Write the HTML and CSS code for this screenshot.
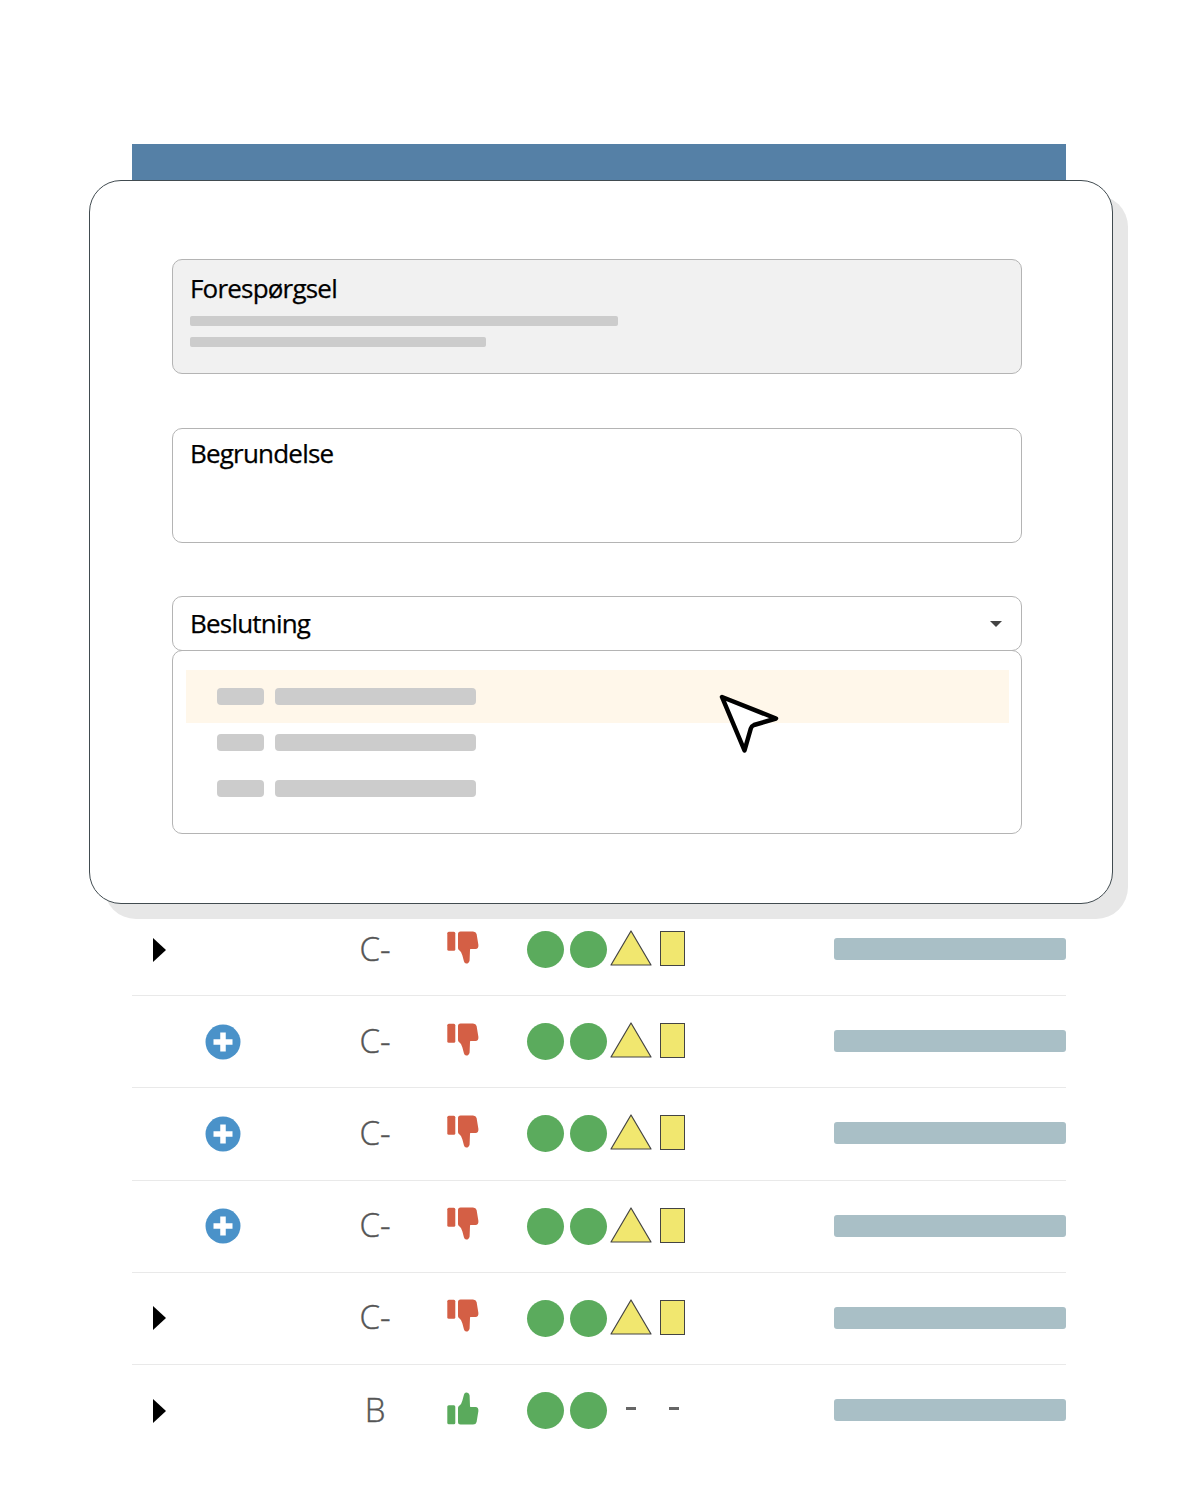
FILE: index.html
```html
<!DOCTYPE html>
<html lang="en">
<head>
    <meta charset="UTF-8">
    <meta name="viewport" content="width=device-width, initial-scale=1.0">
    <title>Beslutning</title>
    <link rel="stylesheet" href="styles.css">
</head>
<body>
<svg class="defs" width="0" height="0" aria-hidden="true">
    <symbol id="thumb" viewBox="0 0 32 33">
        <rect x="0.3" y="0.8" width="8" height="19" rx="1.5"/>
        <path d="M11 3Q11 .5 13.500 .5L26 .5Q29 .5 29.600 3L31.400 14Q31.600 18 28.500 18L23.500 18Q23 18 23 19L22.600 29.500Q22 32.600 19.200 32.600Q17.600 32.600 17 30.500L15.400 24.500Q14.500 20.500 12 19Q11 18.400 11 17Z"/>
    </symbol>
</svg>

<div class="page">
    <div class="topbar"></div>

    <div class="modal">
        <div class="field field-filled">
            <div class="field-label">Forespørgsel</div>
            <div class="line line-long"></div>
            <div class="line line-short"></div>
        </div>

        <div class="field">
            <div class="field-label field-label-tight">Begrundelse</div>
        </div>

        <div class="select">
            <div class="field-label">Beslutning</div>
            <span class="caret"></span>
        </div>
        <div class="options">
            <div class="option option-active"><span class="chip"></span><span class="chip-long"></span></div>
            <div class="option"><span class="chip"></span><span class="chip-long"></span></div>
            <div class="option"><span class="chip"></span><span class="chip-long"></span></div>
            <svg class="pointer" width="64" height="64" viewBox="0 0 64 64">
                <path d="M4 3L58 24.500L36 31Q33.500 32 32.800 34.500L26.500 56.500Z" fill="#fff" stroke="#000" stroke-width="4.500" stroke-linejoin="round"/>
            </svg>
        </div>
    </div>

    <div class="rows">
        <div class="row">
            <span class="expand"><span class="arrow"></span></span>
            <span class="grade">C-</span>
            <svg class="thumb thumb-down"><use href="#thumb"/></svg>
            <span class="marks"><i class="dot"></i><i class="dot"></i><svg class="tri" viewBox="0 0 42 36"><path d="M21 1L41 35H1Z"/></svg><i class="box"></i></span>
            <span class="bar"></span>
        </div>
        <div class="row">
            <span class="expand"><svg class="plus" viewBox="0 0 36 36"><circle cx="18" cy="18" r="17.500" fill="#4a92c9"/><path d="M18 8.500V27.500M8.500 18H27.500" stroke="#fff" stroke-width="5.500"/></svg></span>
            <span class="grade">C-</span>
            <svg class="thumb thumb-down"><use href="#thumb"/></svg>
            <span class="marks"><i class="dot"></i><i class="dot"></i><svg class="tri" viewBox="0 0 42 36"><path d="M21 1L41 35H1Z"/></svg><i class="box"></i></span>
            <span class="bar"></span>
        </div>
        <div class="row">
            <span class="expand"><svg class="plus" viewBox="0 0 36 36"><circle cx="18" cy="18" r="17.500" fill="#4a92c9"/><path d="M18 8.500V27.500M8.500 18H27.500" stroke="#fff" stroke-width="5.500"/></svg></span>
            <span class="grade">C-</span>
            <svg class="thumb thumb-down"><use href="#thumb"/></svg>
            <span class="marks"><i class="dot"></i><i class="dot"></i><svg class="tri" viewBox="0 0 42 36"><path d="M21 1L41 35H1Z"/></svg><i class="box"></i></span>
            <span class="bar"></span>
        </div>
        <div class="row">
            <span class="expand"><svg class="plus" viewBox="0 0 36 36"><circle cx="18" cy="18" r="17.500" fill="#4a92c9"/><path d="M18 8.500V27.500M8.500 18H27.500" stroke="#fff" stroke-width="5.500"/></svg></span>
            <span class="grade">C-</span>
            <svg class="thumb thumb-down"><use href="#thumb"/></svg>
            <span class="marks"><i class="dot"></i><i class="dot"></i><svg class="tri" viewBox="0 0 42 36"><path d="M21 1L41 35H1Z"/></svg><i class="box"></i></span>
            <span class="bar"></span>
        </div>
        <div class="row">
            <span class="expand"><span class="arrow"></span></span>
            <span class="grade">C-</span>
            <svg class="thumb thumb-down"><use href="#thumb"/></svg>
            <span class="marks"><i class="dot"></i><i class="dot"></i><svg class="tri" viewBox="0 0 42 36"><path d="M21 1L41 35H1Z"/></svg><i class="box"></i></span>
            <span class="bar"></span>
        </div>
        <div class="row">
            <span class="expand"><span class="arrow"></span></span>
            <span class="grade">B</span>
            <svg class="thumb thumb-up"><use href="#thumb"/></svg>
            <span class="marks"><i class="dot"></i><i class="dot"></i><b class="dash dash-first"></b><b class="dash"></b></span>
            <span class="bar"></span>
        </div>
    </div>
</div>
</body>
</html>
```

FILE: styles.css
```css
body {
    margin: 0;
    background-color: #ffffff;
    font-family: "Open Sans", sans-serif;
}
.defs { display: block; height: 0; }
.page { width: 934px; margin-left: 132px; padding-top: 144px; }
.topbar { height: 36px; background-color: #5580a6; }

/* Dialog */
.modal {
    box-sizing: border-box;
    height: 724px;
    margin: 0 -47px 0 -43px;
    padding: 78px 90px 0 82px;
    background-color: #ffffff;
    border: 1px solid #414b50;
    border-radius: 32px;
    box-shadow: 15px 15px 0 #e7e7e7;
    position: relative;
}
.field {
    box-sizing: border-box;
    height: 115px;
    margin-bottom: 54px;
    padding: 0 17px;
    border: 1px solid #b4b4b4;
    border-radius: 10px;
}
.field + .select { margin-top: -1px; }
.field-filled { background-color: #f1f1f1; }
.field-label {
    padding-top: 6px;
    color: #000000;
    font-size: 26px;
    line-height: 44px;
    letter-spacing: -0.8px;
    -webkit-text-stroke: 0.25px #000000;
}
.field-label-tight { padding-top: 2px; }
.line { height: 10px; background-color: #cccccc; border-radius: 2px; }
.line-long { width: 428px; margin-top: 6px; }
.line-short { width: 296px; margin-top: 11px; }

.select {
    box-sizing: border-box;
    display: flex;
    justify-content: space-between;
    align-items: center;
    height: 55px;
    padding: 0 19px 0 17px;
    border: 1px solid #b4b4b4;
    border-radius: 10px;
}
.select .field-label { margin-top: -2px; padding-top: 0; }
.caret {
    width: 0;
    height: 0;
    border-left: 6.500px solid transparent;
    border-right: 6.500px solid transparent;
    border-top: 6.500px solid #444444;
}
.options {
    box-sizing: border-box;
    height: 184px;
    margin-top: -1px;
    padding: 19px 12px 0 13px;
    border: 1px solid #b4b4b4;
    border-radius: 10px;
    position: relative;
}
.option {
    display: flex;
    align-items: center;
    gap: 10.5px;
    height: 46px;
    padding-left: 31px;
}
.option-active { height: 53px; margin-bottom: -4px; background-color: #fff7ea; }
.chip { width: 47px; height: 17px; background-color: #cccccc; border-radius: 4px; }
.chip-long { width: 201px; height: 17px; background-color: #cccccc; border-radius: 4px; }
.pointer { position: absolute; left: 545px; top: 43px; }

/* Rows behind the dialog */
.row {
    box-sizing: border-box;
    display: flex;
    align-items: center;
    height: 92.2px;
    padding-left: 1px;
    border-bottom: 1px solid #e9e9e9;
}
.row:last-child { border-bottom-color: transparent; }
.expand { display: flex; align-items: center; justify-content: center; width: 180px; }
.expand:has(.arrow) { justify-content: flex-start; padding-left: 20px; width: 160px; }
.arrow {
    width: 0;
    height: 0;
    border-top: 12px solid transparent;
    border-bottom: 12px solid transparent;
    border-left: 13px solid #000000;
}
.plus { width: 36px; height: 36px; }
.grade {
    width: 124px;
    margin-top: -2px;
    color: #555555;
    font-size: 33px;
    line-height: 40px;
    font-weight: 300;
    text-align: center;
    -webkit-text-stroke: 0.4px #555555;
}
.thumb { width: 32px; height: 33px; margin-left: 10px; }
.thumb-down { fill: #d45f45; margin-top: -5px; }
.thumb-up { fill: #5aaa5c; transform: scaleY(-1); margin-top: -5px; }
.marks { display: flex; align-items: center; gap: 6px; width: 307px; margin-left: 48px; height: 37px; }
.dot { width: 37px; height: 37px; background-color: #5bab5d; border-radius: 50%; }
.tri { width: 42px; height: 36px; margin-left: -3px; margin-top: -3px; fill: #f1e76f; stroke: #444444; stroke-width: 1.2; stroke-linejoin: round; }
.box { box-sizing: border-box; width: 25px; height: 35px; margin-left: 2px; margin-top: -2px; background-color: #f1e76f; border: 1px solid #444444; }
.dash { width: 10px; height: 2.500px; margin-left: 27px; margin-top: -4px; background-color: #666666; }
.dash-first { margin-left: 13px; }
.bar { width: 232px; height: 22px; margin-top: -1.2px; background-color: #a9bfc6; border-radius: 3px; }
```
